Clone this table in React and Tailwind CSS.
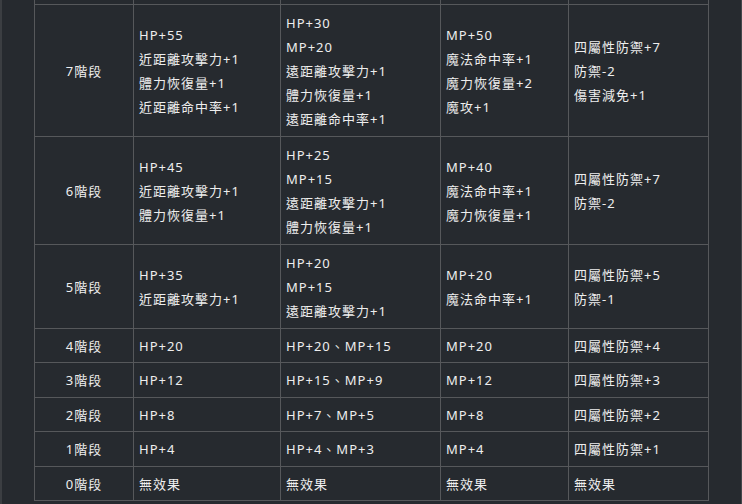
const rows = [
  {
    stage: "7階段",
    cells: [
      ["HP+55", "近距離攻擊力+1", "體力恢復量+1", "近距離命中率+1"],
      ["HP+30", "MP+20", "遠距離攻擊力+1", "體力恢復量+1", "遠距離命中率+1"],
      ["MP+50", "魔法命中率+1", "魔力恢復量+2", "魔攻+1"],
      ["四屬性防禦+7", "防禦-2", "傷害減免+1"],
    ],
  },
  {
    stage: "6階段",
    cells: [
      ["HP+45", "近距離攻擊力+1", "體力恢復量+1"],
      ["HP+25", "MP+15", "遠距離攻擊力+1", "體力恢復量+1"],
      ["MP+40", "魔法命中率+1", "魔力恢復量+1"],
      ["四屬性防禦+7", "防禦-2"],
    ],
  },
  {
    stage: "5階段",
    cells: [
      ["HP+35", "近距離攻擊力+1"],
      ["HP+20", "MP+15", "遠距離攻擊力+1"],
      ["MP+20", "魔法命中率+1"],
      ["四屬性防禦+5", "防禦-1"],
    ],
  },
  { stage: "4階段", cells: [["HP+20"], ["HP+20、MP+15"], ["MP+20"], ["四屬性防禦+4"]] },
  { stage: "3階段", cells: [["HP+12"], ["HP+15、MP+9"], ["MP+12"], ["四屬性防禦+3"]] },
  { stage: "2階段", cells: [["HP+8"], ["HP+7、MP+5"], ["MP+8"], ["四屬性防禦+2"]] },
  { stage: "1階段", cells: [["HP+4"], ["HP+4、MP+3"], ["MP+4"], ["四屬性防禦+1"]] },
  { stage: "0階段", cells: [["無效果"], ["無效果"], ["無效果"], ["無效果"]] },
];

function Cell({ lines }) {
  return (
    <div className="bg-[#262a2f] flex flex-col justify-center pl-[5px]">
      {lines.map((l, i) => (
        <div key={i}>{l}</div>
      ))}
    </div>
  );
}

export default function App() {
  return (
    <div
      className="h-[504px] w-[742px] overflow-hidden bg-[#262a2f] border-l-2 border-l-[#3b3e42] border-r border-r-[#44474b] text-[13px] leading-[24px] tracking-[1px] text-[#eeeeee]"
      style={{ fontFamily: '"Noto Sans", "Noto Sans CJK TC", sans-serif' }}
    >
      <div className="ml-[32px] w-[675px] grid grid-cols-[98px_146px_159px_127px_139px] grid-rows-[4px_131px_107px_83px_33px_34px_33px_34px_33px] gap-px bg-[#56585b] px-px pb-px">
        {Array.from({ length: 5 }).map((_, i) => (
          <div key={i} className="bg-[#262a2f]" />
        ))}
        {rows.map((r) => (
          <div key={r.stage} className="contents">
            <div className="bg-[#262a2f] flex items-center justify-center">{r.stage}</div>
            {r.cells.map((c, i) => (
              <Cell key={i} lines={c} />
            ))}
          </div>
        ))}
      </div>
    </div>
  );
}
